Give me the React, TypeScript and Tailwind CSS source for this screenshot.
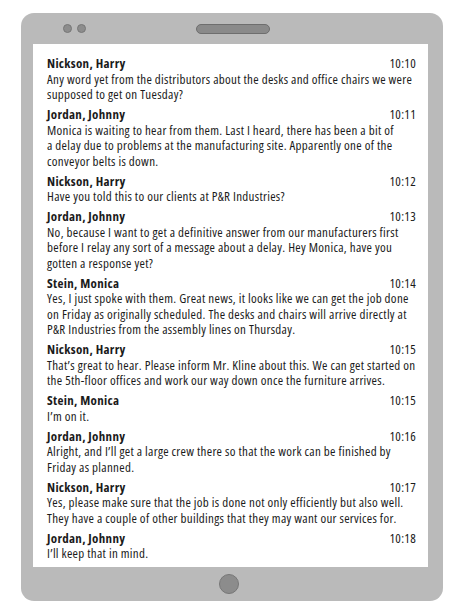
import React from 'react';

type Message = {
  name: string;
  time: string;
  lines: string[];
};

const messages: Message[] = [
  {
    name: 'Nickson, Harry',
    time: '10:10',
    lines: [
      'Any word yet from the distributors about the desks and office chairs we were',
      'supposed to get on Tuesday?',
    ],
  },
  {
    name: 'Jordan, Johnny',
    time: '10:11',
    lines: [
      'Monica is waiting to hear from them. Last I heard, there has been a bit of',
      'a delay due to problems at the manufacturing site. Apparently one of the',
      'conveyor belts is down.',
    ],
  },
  {
    name: 'Nickson, Harry',
    time: '10:12',
    lines: ['Have you told this to our clients at P&R Industries?'],
  },
  {
    name: 'Jordan, Johnny',
    time: '10:13',
    lines: [
      'No, because I want to get a definitive answer from our manufacturers first',
      'before I relay any sort of a message about a delay. Hey Monica, have you',
      'gotten a response yet?',
    ],
  },
  {
    name: 'Stein, Monica',
    time: '10:14',
    lines: [
      'Yes, I just spoke with them. Great news, it looks like we can get the job done',
      'on Friday as originally scheduled. The desks and chairs will arrive directly at',
      'P&R Industries from the assembly lines on Thursday.',
    ],
  },
  {
    name: 'Nickson, Harry',
    time: '10:15',
    lines: [
      'That\u2019s great to hear. Please inform Mr. Kline about this. We can get started on',
      'the 5th-floor offices and work our way down once the furniture arrives.',
    ],
  },
  {
    name: 'Stein, Monica',
    time: '10:15',
    lines: ['I\u2019m on it.'],
  },
  {
    name: 'Jordan, Johnny',
    time: '10:16',
    lines: [
      'Alright, and I\u2019ll get a large crew there so that the work can be finished by',
      'Friday as planned.',
    ],
  },
  {
    name: 'Nickson, Harry',
    time: '10:17',
    lines: [
      'Yes, please make sure that the job is done not only efficiently but also well.',
      'They have a couple of other buildings that they may want our services for.',
    ],
  },
  {
    name: 'Jordan, Johnny',
    time: '10:18',
    lines: ['I\u2019ll keep that in mind.'],
  },
];

function ChatEntry({ msg }: { msg: Message }) {
  return (
    <div className="flex flex-col">
      <div className="flex items-baseline justify-between">
        <span className="font-bold">{msg.name}</span>
        <span>{msg.time}</span>
      </div>
      {msg.lines.map((line, i) => (
        <div key={i} className="whitespace-nowrap">
          {line}
        </div>
      ))}
    </div>
  );
}

export default function App() {
  return (
    <div className="w-[460px] h-[607px] bg-white pt-[13px] pl-[21px] overflow-hidden">
      {/* tablet frame */}
      <div className="w-[422px] h-[588px] rounded-[13px] bg-[#bababa] flex flex-col">
        <div className="h-[31px] flex items-center pl-[42px] shrink-0">
          <div className="w-[9px] h-[9px] rounded-full bg-[#8d8d8d] border border-[#777]" />
          <div className="w-[9px] h-[9px] rounded-full bg-[#8d8d8d] border border-[#777] ml-[5px]" />
          <div className="w-[74px] h-[10px] rounded-full bg-[#8a8a8a] border border-[#6e6e6e] ml-[110px]" />
        </div>

        <div className="ml-[12px] w-[395px] h-[523px] bg-white shrink-0 pt-[12px] pl-[14px] pr-[12px] text-[13px] font-stretch-semi-condensed tracking-[0.3px] leading-[15.5px] text-[#1b1b1b] font-['Open_Sans',sans-serif] flex flex-col gap-[4.5px]">
          {messages.map((m, i) => (
            <ChatEntry key={i} msg={m} />
          ))}
        </div>

        <div className="flex-1 flex items-center justify-center pr-[6px]">
          <div className="w-[20px] h-[20px] rounded-full bg-[#8c8c8c] border border-[#777]" />
        </div>
      </div>
    </div>
  );
}
